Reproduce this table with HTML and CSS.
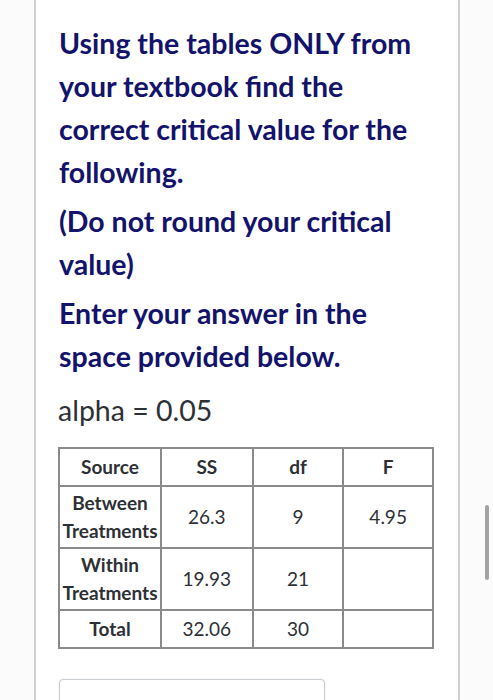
FILE: index.html
```html
<!DOCTYPE html>
<html>
<head>
<meta charset="utf-8">
<link rel="stylesheet" href="styles.css">
</head>
<body>
<div class="page">
  <div class="card">
    <p class="q">Using the tables ONLY from your textbook find the correct critical value for the following.</p>
    <p class="q">(Do not round your critical value)</p>
    <p class="q">Enter your answer in the space provided below.</p>
    <p class="alpha">alpha = 0.05</p>
    <table class="anova">
      <tr>
        <th class="c1">Source</th>
        <th class="c2">SS</th>
        <th class="c3">df</th>
        <th class="c4">F</th>
      </tr>
      <tr class="tall">
        <th>Between<br>Treatments</th>
        <td>26.3</td>
        <td>9</td>
        <td>4.95</td>
      </tr>
      <tr class="tall">
        <th>Within<br>Treatments</th>
        <td>19.93</td>
        <td>21</td>
        <td></td>
      </tr>
      <tr>
        <th>Total</th>
        <td>32.06</td>
        <td>30</td>
        <td></td>
      </tr>
    </table>
    <div class="answer"></div>
  </div>
  <div class="scrollbar"></div>
</div>
</body>
</html>
```
FILE: styles.css
```css
html, body {
  margin: 0;
  padding: 0;
  background: #fbfbfb;
  font-family: Lato, "Open Sans", sans-serif;
}
.page {
  height: 700px;
  overflow: hidden;
  position: relative;
}
.card {
  margin-left: 34px;
  width: 426px;
  height: 700px;
  border-left: 2px solid #cfcfcf;
  border-right: 2px solid #cfcfcf;
  background: #ffffff;
  padding: 22px 44px 0 23px;
  box-sizing: border-box;
}
.q {
  margin: 0 0 6px 0;
  font-size: 28.5px;
  line-height: 43px;
  font-weight: 700;
  color: #13136b;
}
.alpha {
  margin: 12px 0 17px -1px;
  font-size: 28.5px;
  line-height: 40px;
  color: #2d3035;
}
.anova {
  border-collapse: collapse;
  margin-left: -1px;
  width: 376px;
  color: #2d3035;
  font-size: 19px;
  line-height: 28px;
}
.anova th, .anova td {
  border: 2px solid #8a8a8a;
  text-align: center;
  padding: 4px 0;
}
.anova th {
  font-weight: 700;
}
.anova td {
  font-weight: 400;
}
.c1 { width: 100px; }
.c2 { width: 90px; }
.c3 { width: 89px; }
.c4 { width: 88px; }
.anova tr.tall th, .anova tr.tall td {
  padding: 2px 0;
}
.answer {
  margin-top: 30px;
  width: 264px;
  height: 60px;
  border: 1px solid #c7cdd1;
  border-radius: 4px;
  box-shadow: 0 0 2px rgba(0,0,0,0.12);
}
.scrollbar {
  position: absolute;
  left: 485px;
  top: 505px;
  width: 4px;
  height: 75px;
  border-radius: 2px;
  background: #a3a3a3;
}
```
